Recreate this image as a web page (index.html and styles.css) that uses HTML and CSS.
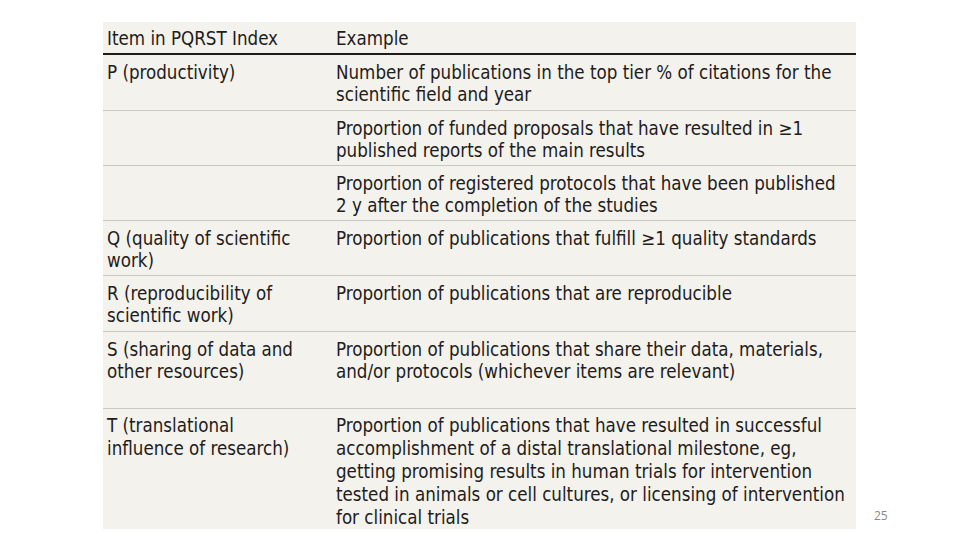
FILE: index.html
```html
<!DOCTYPE html>
<html>
<head>
<meta charset="utf-8">
<link rel="stylesheet" href="styles.css">
</head>
<body>
<div class="slide">
  <table class="pqrst">
    <thead>
      <tr class="head">
        <th class="c1">Item in PQRST Index</th>
        <th class="c2">Example</th>
      </tr>
    </thead>
    <tbody>
      <tr class="r56">
        <td>P (productivity)</td>
        <td>Number of publications in the top tier % of citations for the scientific field and year</td>
      </tr>
      <tr class="r55">
        <td></td>
        <td>Proportion of funded proposals that have resulted in ≥1 published reports of the main results</td>
      </tr>
      <tr class="r55">
        <td></td>
        <td>Proportion of registered protocols that have been published 2 y after the completion of the studies</td>
      </tr>
      <tr class="r55">
        <td>Q (quality of scientific work)</td>
        <td>Proportion of publications that fulfill ≥1 quality standards</td>
      </tr>
      <tr class="r56">
        <td>R (reproducibility of scientific work)</td>
        <td>Proportion of publications that are reproducible</td>
      </tr>
      <tr class="r77">
        <td>S (sharing of data and other resources)</td>
        <td>Proportion of publications that share their data, materials, and/or protocols (whichever items are relevant)</td>
      </tr>
      <tr class="last">
        <td>T (translational influence of research)</td>
        <td>Proportion of publications that have resulted in successful accomplishment of a distal translational milestone, eg, getting promising results in human trials for intervention tested in animals or cell cultures, or licensing of intervention for clinical trials</td>
      </tr>
    </tbody>
  </table>
  <div class="pagenum">25</div>
</div>
</body>
</html>
```

FILE: styles.css
```css
html, body {
  margin: 0;
  padding: 0;
  background: #ffffff;
}
.slide {
  width: 960px;
  height: 540px;
  position: relative;
  overflow: hidden;
  padding-top: 22px;
  box-sizing: border-box;
}
.pqrst {
  margin-left: 103px;
  width: 753px;
  border-collapse: collapse;
  background: #f3f2ec;
  font-family: "DejaVu Sans Condensed", "Open Sans", sans-serif;
  font-size: 18.6px;
  line-height: 22px;
  color: #1f1c1d;
  table-layout: fixed;
}
.pqrst th, .pqrst td {
  text-align: left;
  vertical-align: top;
  padding: 7px 4px 0 4px;
  box-sizing: border-box;
}
.pqrst th {
  font-weight: normal;
  padding-top: 6px;
}
.c1 { width: 229px; }
.pqrst td:first-child { padding-right: 30px; }
.head { height: 32px; border-bottom: 2px solid #1f1c1d; }
.pqrst tbody tr { border-bottom: 1px solid #c9c8c2; }
.pqrst tbody tr.last { border-bottom: none; line-height: 23px; }
.pqrst tr.last td { padding-top: 5px; }
.r55 { height: 55px; }
.r56 { height: 56px; }
.r77 { height: 77px; }
.last { height: 120px; }
.pqrst td:nth-child(2) { padding-right: 6px; }
.pagenum {
  position: absolute;
  left: 874px;
  top: 507px;
  font-family: "Open Sans", "Liberation Sans", sans-serif;
  font-size: 12px;
  color: #888888;
}
```
